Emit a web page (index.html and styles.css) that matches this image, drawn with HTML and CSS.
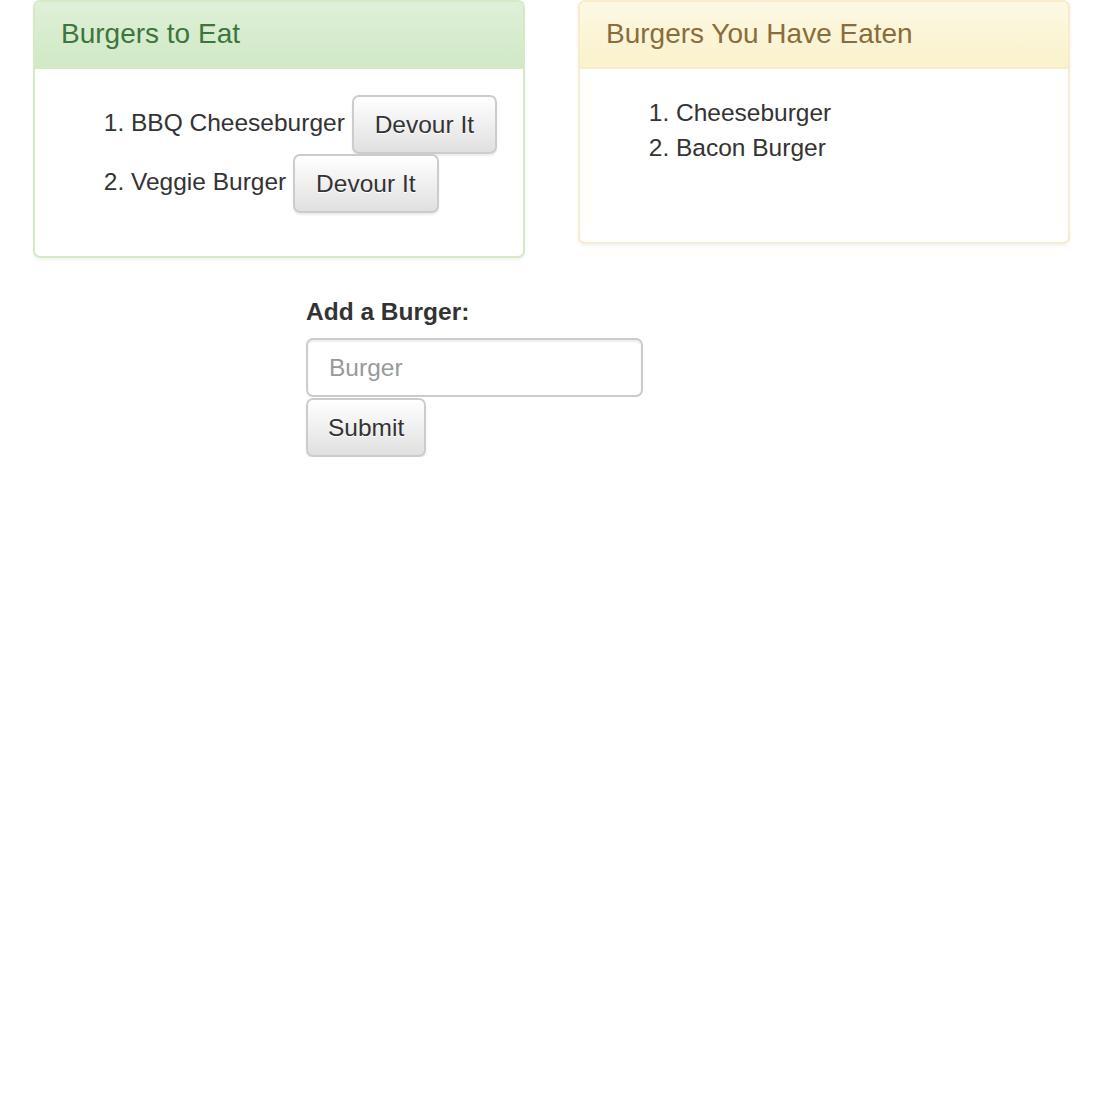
FILE: index.html
```html
<!DOCTYPE html>
<html lang="en">
<head>
<meta charset="utf-8">
<title>Burgers</title>
<link rel="stylesheet" href="styles.css">
</head>
<body>
<div class="row">
  <div class="panel panel-success">
    <div class="panel-heading"><h3 class="panel-title">Burgers to Eat</h3></div>
    <div class="panel-body">
      <ol class="list">
        <li>BBQ Cheeseburger <button class="btn btn-devour" type="button">Devour It</button></li>
        <li>Veggie Burger <button class="btn btn-devour" type="button">Devour It</button></li>
      </ol>
    </div>
  </div>
  <div class="panel panel-warning">
    <div class="panel-heading"><h3 class="panel-title">Burgers You Have Eaten</h3></div>
    <div class="panel-body panel-body-tall">
      <ol class="list">
        <li>Cheeseburger</li>
        <li>Bacon Burger</li>
      </ol>
    </div>
  </div>
</div>
<form class="add-form">
  <label class="add-label" for="burger">Add a Burger:</label>
  <input class="form-control" id="burger" type="text" placeholder="Burger">
  <button class="btn" type="submit">Submit</button>
</form>
</body>
</html>
```
FILE: styles.css
```css
* { box-sizing: border-box; }
html, body { margin: 0; padding: 0; background: #fff; }
body {
  font-family: "Liberation Sans", Arial, sans-serif;
  font-size: 24.5px;
  line-height: 35px;
  color: #333;
}
.row {
  display: grid;
  grid-template-columns: 492px 492px;
  column-gap: 53px;
  align-items: start;
  padding-left: 33px;
}
.panel {
  background: #fff;
  border: 2px solid transparent;
  border-radius: 7px;
  box-shadow: 0 2px 3px rgba(0,0,0,.05);
  margin-bottom: 35px;
}
.panel-heading {
  padding: 17px 26px;
  border-bottom: 2px solid transparent;
  border-radius: 5px 5px 0 0;
}
.panel-title {
  margin: 0;
  font-size: 28px;
  font-weight: 400;
  line-height: 1.1;
}
.panel-success { border-color: #d6e9c6; }
.panel-success .panel-heading {
  color: #3c763d;
  background: linear-gradient(#dff0d8 0%, #d0e9c6 100%);
  border-bottom-color: #d6e9c6;
}
.panel-warning { border-color: #faebcc; }
.panel-warning .panel-heading {
  color: #8a6d3b;
  background: linear-gradient(#fcf8e3 0%, #faf2cc 100%);
  border-bottom-color: #faebcc;
}
.panel-body { padding: 26px; }
.panel-body-tall { padding-bottom: 60px; }
.list {
  margin: 0 0 17.5px;
  padding-left: 70px;
}
.list li { white-space: nowrap; }
.btn {
  display: inline-block;
  font-family: inherit;
  font-size: 24.5px;
  line-height: 35px;
  padding: 10px 20px;
  border: 2px solid #ccc;
  border-radius: 7px;
  color: #333;
  text-shadow: 0 1px 0 #fff;
  background: linear-gradient(#fff 0%, #e0e0e0 100%);
  box-shadow: inset 0 2px 0 rgba(255,255,255,.15), 0 2px 2px rgba(0,0,0,.075);
  vertical-align: middle;
  cursor: pointer;
  margin: 0;
}
.btn-devour { padding: 10px 21px; }
.add-form {
  margin-left: 306px;
  margin-top: 1px;
  width: 337px;
}
.add-label {
  display: inline-block;
  font-weight: 700;
  margin-bottom: 9px;
}
.form-control {
  display: block;
  width: 337px;
  height: 59px;
  padding: 10.5px 21px;
  font-family: inherit;
  font-size: 24.5px;
  line-height: 35px;
  color: #555;
  background: #fff;
  border: 2px solid #ccc;
  border-radius: 7px;
  box-shadow: inset 0 2px 2px rgba(0,0,0,.075);
  margin: 0 0 1px;
}
.form-control::placeholder { color: #999; }
```
